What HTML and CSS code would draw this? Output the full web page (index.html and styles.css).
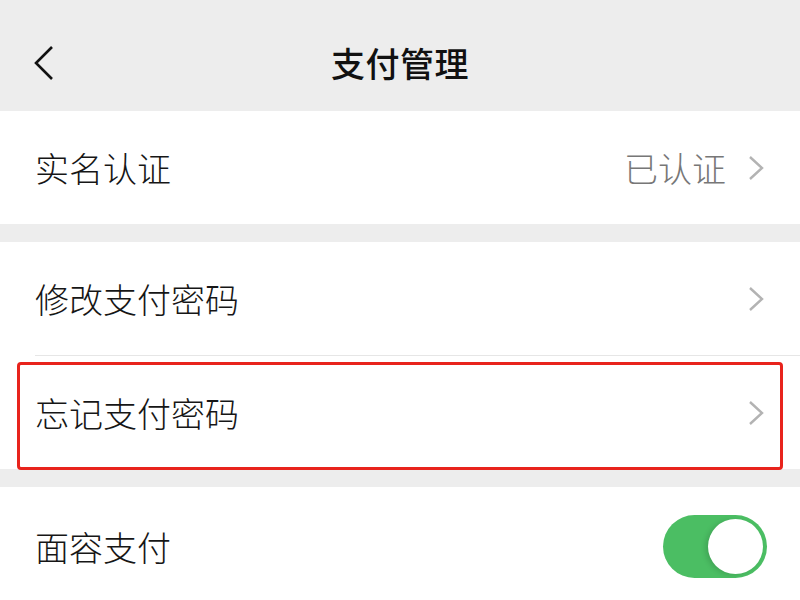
FILE: index.html
```html
<!DOCTYPE html>
<html lang="zh-CN">
<head>
<meta charset="utf-8">
<title>支付管理</title>
<link rel="stylesheet" href="styles.css">
</head>
<body>
<div class="page">
  <header class="navbar">
    <span class="back">
      <svg width="22" height="36" viewBox="0 0 22 36"><polyline points="19,2 3,18 19,34" fill="none" stroke="#111" stroke-width="2.6" stroke-linejoin="miter"/></svg>
    </span>
    <h1 class="title">支付管理</h1>
  </header>

  <section class="group">
    <div class="row">
      <span class="label">实名认证</span>
      <span class="value">已认证</span>
      <span class="arrow"><svg width="16" height="26" viewBox="0 0 16 26"><polyline points="2,2 14,13 2,24" fill="none" stroke="#b3b3b3" stroke-width="2.4"/></svg></span>
    </div>
  </section>

  <section class="group">
    <div class="row">
      <span class="label">修改支付密码</span>
      <span class="arrow"><svg width="16" height="26" viewBox="0 0 16 26"><polyline points="2,2 14,13 2,24" fill="none" stroke="#b3b3b3" stroke-width="2.4"/></svg></span>
    </div>
    <div class="divider"></div>
    <div class="row marked">
      <span class="label">忘记支付密码</span>
      <span class="arrow"><svg width="16" height="26" viewBox="0 0 16 26"><polyline points="2,2 14,13 2,24" fill="none" stroke="#b3b3b3" stroke-width="2.4"/></svg></span>
    </div>
  </section>

  <section class="group">
    <div class="row tall">
      <span class="label">面容支付</span>
      <span class="switch"><span class="knob"></span></span>
    </div>
  </section>
</div>
</body>
</html>
```

FILE: styles.css
```css
* { box-sizing: border-box; }
html, body {
  margin: 0;
  padding: 0;
  background: #ededed;
  font-family: "Noto Sans CJK SC", "Noto Sans", sans-serif;
  color: #111;
  overflow: hidden;
}
.page {
  width: 800px;
  height: 600px;
  display: flex;
  flex-direction: column;
  gap: 18px;
}
.navbar {
  height: 111px;
  display: flex;
  align-items: center;
  justify-content: center;
  position: relative;
  flex-shrink: 0;
  margin-bottom: -18px;
}
.back {
  position: absolute;
  left: 33px;
  top: 45px;
  display: flex;
}
.title {
  margin: 0;
  font-size: 34px;
  font-weight: 500;
  letter-spacing: 0.5px;
  padding-top: 14px;
  color: #111;
}
.group {
  background: #fff;
  display: flex;
  flex-direction: column;
  flex-shrink: 0;
}
.row {
  height: 113px;
  display: flex;
  align-items: center;
  padding: 0 36px 0 35px;
  position: relative;
}
.row.tall { height: 118px; }
.label {
  font-size: 34px;
  font-weight: 300;
  flex: 1;
  color: #161616;
}
.value {
  font-size: 34px;
  font-weight: 300;
  color: #777;
  margin-right: 22px;
}
.arrow { display: flex; }
.divider {
  height: 1px;
  background: #e6e6e6;
  margin-left: 35px;
}
.marked::after {
  content: "";
  position: absolute;
  left: 17px;
  right: 17px;
  top: 6px;
  bottom: -1px;
  border: 3px solid #e8231c;
  border-radius: 4px;
}
.switch {
  width: 104px;
  height: 63px;
  border-radius: 32px;
  background: #4bbe63;
  display: flex;
  align-items: center;
  justify-content: flex-end;
  padding-right: 4px;
  margin-right: -3px;
}
.knob {
  width: 55px;
  height: 55px;
  border-radius: 50%;
  background: #fff;
  box-shadow: -3px 1px 5px rgba(0,0,0,0.12);
}
```
